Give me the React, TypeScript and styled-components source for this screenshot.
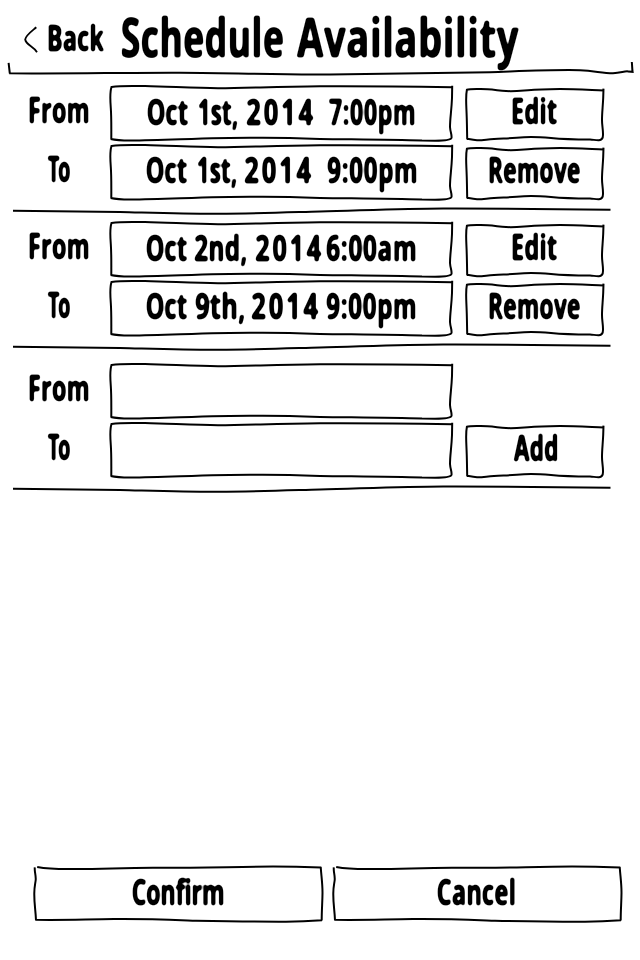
import React, { useLayoutEffect, useState } from "react";
import styled, { createGlobalStyle } from "styled-components";

const GlobalStyle = createGlobalStyle`
  * { box-sizing: border-box; }
  body { margin: 0; background: #fff; }
`;

const FONT = '"Open Sans", "Noto Sans", sans-serif';

const Page = styled.main`
  width: 640px;
  height: 960px;
  display: flex;
  flex-direction: column;
  background: #fff;
  color: #000;
  overflow: hidden;
`;

const Defs = styled.svg`
  position: absolute;
  width: 0;
  height: 0;
`;

const Header = styled.header`
  position: relative;
  height: 86px;
  flex: none;
  display: flex;
  align-items: flex-start;
`;

const BackButton = styled.button`
  display: flex;
  align-items: flex-start;
  width: 122px;
  height: 60px;
  padding: 20px 0 0 24px;
  border: 0;
  background: none;
  color: inherit;
  font: inherit;
`;

const Chevron = styled.svg`
  width: 14px;
  height: 26px;
  margin: 7px 11px 0 0;
  overflow: visible;
`;

const Title = styled.h1`
  display: flex;
  margin: 0;
  padding-top: 10px;
`;

const Stroke = styled.svg`
  position: absolute;
  inset: 0;
  width: 100%;
  height: 100%;
  overflow: visible;
  pointer-events: none;
`;

const Group = styled.section<{ $height: number }>`
  height: ${(p) => p.$height}px;
  flex: none;
  width: 598px;
  margin-left: 13px;
  display: grid;
  grid-template-columns: 97px 342px 152px;
  grid-template-rows: 58.5px 63px 6px;
  align-content: start;
`;

const Label = styled.div<{ $indent: number; $drop: number }>`
  padding: ${(p) => p.$drop}px 0 0 ${(p) => p.$indent}px;
`;

const Field = styled.div<{ $indent: number; $drop: number }>`
  position: relative;
  width: 342px;
  height: 54px;
  display: flex;
  padding: ${(p) => p.$drop}px 0 0 ${(p) => p.$indent}px;
`;

const ActionButton = styled.button<{ $drop: number }>`
  position: relative;
  width: 138px;
  height: 51px;
  margin: 3px 0 0 14px;
  padding: ${(p) => p.$drop}px 0 0;
  display: flex;
  justify-content: center;
  border: 0;
  background: none;
  color: inherit;
`;

const Rule = styled.div`
  position: relative;
  grid-column: 1 / -1;
  width: 598px;
  height: 6px;
`;

const Footer = styled.footer`
  margin: auto 0 39px 34px;
  display: flex;
  gap: 10.8px;
`;

const WideButton = styled.button<{ $indent: number }>`
  position: relative;
  width: 288px;
  height: 55px;
  padding: 8.2px 0 0 ${(p) => p.$indent}px;
  display: flex;
  border: 0;
  background: none;
  color: inherit;
`;

const Word = styled.span<{ $width: number; $size: number; $gap: number }>`
  display: block;
  flex: none;
  width: ${(p) => p.$width}px;
  height: ${(p) => p.$size}px;
  margin-left: ${(p) => p.$gap}px;
  font: 700 ${(p) => p.$size}px/${(p) => p.$size}px ${FONT};
  white-space: nowrap;
  text-align: left;
  filter: url(#marker);
`;

const Ink = styled.span<{ $tracking: number }>`
  display: inline-block;
  letter-spacing: ${(p) => p.$tracking}px;
  transform-origin: 0 0;
`;

interface LetteringProps {
  text: string;
  width: number;
  size?: number;
  gap?: number;
}

const trackingFor = (text: string, size: number) => {
  if (text === "2014") return size * 0.11;
  if (/\d:/.test(text)) return size * 0.03;
  if (text === "To") return size * -0.05;
  return text === "Confirm" ? 0 : size * 0.015;
};

/* Condenses a word so that its ink fills the given width. */
function Lettering({ text, width, size = 35, gap = 0 }: LetteringProps) {
  const [fit, setFit] = useState({ scale: 0.8, shift: 0 });
  const tracking = trackingFor(text, size);
  useLayoutEffect(() => {
    const ctx = document.createElement("canvas").getContext("2d");
    if (!ctx) return;
    ctx.font = `700 ${size}px ${FONT}`;
    (ctx as any).letterSpacing = `${tracking}px`;
    const m = ctx.measureText(text);
    const scale = width / (m.actualBoundingBoxLeft + m.actualBoundingBoxRight);
    setFit({ scale, shift: m.actualBoundingBoxLeft * scale });
  }, [text, width, size, tracking]);
  return (
    <Word $width={width} $size={size} $gap={gap}>
      <Ink
        $tracking={tracking}
        style={{ transform: `translateX(${fit.shift}px) scaleX(${fit.scale})` }}
      >
        {text}
      </Ink>
    </Word>
  );
}

const line = { fill: "none", stroke: "#000", strokeWidth: 2 };

const FieldFrame = () => (
  <Stroke aria-hidden>
    <path
      {...line}
      d="M342 1.3C300 .6 250 .1 210 .3C165 .6 140 2 108 2.2C85 2.2 60 .6 35 .1C20 -.3 8 0 1.5 1C.5 4 0 12 .8 22C1.5 32 1.3 42 1.3 53M342.2 -.2L342 12C341.5 25 340 32 340 41C340.3 46 342 49 341.5 51.8C341 53.8 336 54.8 325 54.8L312 54.6C280 53.4 240 53.4 210 52.9C180 51.8 155 51.6 140 51.8C100 51.8 60 54 20 54.6C12 54.4 6 54 .6 52.9"
    />
  </Stroke>
);

const ButtonFrame = () => (
  <Stroke aria-hidden>
    <path
      {...line}
      d="M137.6 1.6C120 .8 108 0 94 0C80 .2 72 .4 62 1.2C54 1.8 48 2.5 40 2C30 1.2 22 0 14 .1C8 0 3 0 .9 .8C0 5 0 12 .4 20C1 32 1 42 1.2 50M137.5 -.4L137.2 9C136.8 18 136 24 136 31C136 37 137.2 41 137 46C137 49 136.5 51 133 51.2C129 51.3 128 50.7 124 50.5C108 50.5 95 50 85 49C74 48 65 47.6 58 48.2C46 49.4 38 49.4 28 50C20 50.5 17 51.3 11 51.2C7 51 5 50.5 .7 49.7"
    />
  </Stroke>
);

const WideFrame = () => (
  <Stroke aria-hidden>
    <path
      {...line}
      d="M.8 1.3C.3 6 2.1 9 1.7 14C1.2 18 .3 21 .3 27C.1 38 1.6 44 2 54.2M3.2 1C14 3 26 3.3 42 3C72 2.8 90 1.8 119 1.8C165 2 200 .8 239 .6C258 .6 270 .9 287 1.5M286.7 .8C287.3 10 288.6 18 288.5 27C288.4 37 287.7 44 287.7 54.6M1.4 53.8C30 54.3 52 53.3 80 53.1C112 52.8 132 53.7 162 54.8C195 55.4 222 55.8 252 55.7C266 55.6 277 55 288 54.2"
    />
  </Stroke>
);

const Divider = () => (
  <Rule>
    <Stroke aria-hidden>
      <path
        {...line}
        d="M0 2.8C35 3 70 3.4 107 4C140 4.8 170 5.9 205 5.8C245 5.6 275 4.4 307 3.5C350 2.4 390 .7 430 .5C490 .4 545 1 597.5 1.8"
      />
    </Stroke>
  </Rule>
);

type Piece = [text: string, width: number, gap: number];

interface Entry {
  height: number;
  indent: number;
  from: Piece[];
  to: Piece[];
  actions: [Piece | null, Piece];
}

const entries: Entry[] = [
  {
    height: 136,
    indent: 38,
    from: [["Oct", 40, 0], ["1st,", 38, 11], ["2014", 66, 10], ["7:00pm", 85, 16]],
    to: [["Oct", 40, 0], ["1st,", 38, 11], ["2014", 66, 9], ["9:00pm", 88, 17]],
    actions: [["Edit", 44, 0], ["Remove", 90, 0]],
  },
  {
    height: 142,
    indent: 37,
    from: [["Oct", 40, 0], ["2nd,", 51, 8], ["2014", 65, 10], ["6:00am", 88, 6]],
    to: [["Oct", 40, 0], ["9th,", 48, 9], ["2014", 66, 8], ["9:00pm", 88, 9]],
    actions: [["Edit", 44, 0], ["Remove", 90, 0]],
  },
  {
    height: 130,
    indent: 37,
    from: [],
    to: [],
    actions: [null, ["Add", 43, 0]],
  },
];

const Words = ({ pieces }: { pieces: Piece[] }) => (
  <>
    {pieces.map(([text, width, gap], i) => (
      <Lettering key={i} text={text} width={width} gap={gap} />
    ))}
  </>
);

const Action = ({ piece, drop }: { piece: Piece; drop: number }) => (
  <ActionButton $drop={drop}>
    <ButtonFrame />
    <Words pieces={[piece]} />
  </ActionButton>
);

export default function App() {
  return (
    <Page>
      <GlobalStyle />
      <Defs aria-hidden>
        {/* Rounds the corners of the letters like a felt-tip marker. */}
        <filter id="marker" x="-10%" y="-20%" width="120%" height="150%">
          <feGaussianBlur stdDeviation="0.9" />
          <feComponentTransfer>
            <feFuncA type="linear" slope="3" intercept="-0.6" />
          </feComponentTransfer>
        </filter>
      </Defs>
      <Header>
        <BackButton>
          <Chevron aria-hidden>
            <path {...line} strokeWidth={1.8} d="M12.3 .3C8 4 2 8 1.2 12.5C2 18 9 19 13 25.2" />
          </Chevron>
          <Lettering text="Back" width={55} />
        </BackButton>
        <Title>
          <Lettering text="Schedule" width={161} size={53} />
          <Lettering text="Availability" width={222} size={53} gap={14} />
        </Title>
        <Stroke aria-hidden>
          <path
            {...line}
            d="M8.6 62.8L9.8 73.3L9.2 73.3C70 74 120 72.5 180 72.7C240 73 280 75 330 74.4C390 74 440 72.8 490 72.2C525 71 555 69.5 580 70.2C595 71 602 73 613 73.2C621 73 624 71 628 71.4L632.6 71.8C632 68 632.3 66 631.8 62"
          />
        </Stroke>
      </Header>
      {entries.map((e, i) => (
        <Group key={i} $height={e.height}>
          <Label $indent={17} $drop={6}>
            <Lettering text="From" width={58} />
          </Label>
          <Field $indent={e.indent} $drop={8}>
            <FieldFrame />
            <Words pieces={e.from} />
          </Field>
          {e.actions[0] ? <Action piece={e.actions[0]} drop={4} /> : <span />}
          <Label $indent={35} $drop={6}>
            <Lettering text="To" width={22} />
          </Label>
          <Field $indent={37} $drop={7}>
            <FieldFrame />
            <Words pieces={e.to} />
          </Field>
          <Action piece={e.actions[1]} drop={4} />
          <Divider />
        </Group>
      ))}
      <Footer>
        <WideButton $indent={99}>
          <WideFrame />
          <Lettering text="Confirm" width={90} />
        </WideButton>
        <WideButton $indent={105}>
          <WideFrame />
          <Lettering text="Cancel" width={76} />
        </WideButton>
      </Footer>
    </Page>
  );
}
